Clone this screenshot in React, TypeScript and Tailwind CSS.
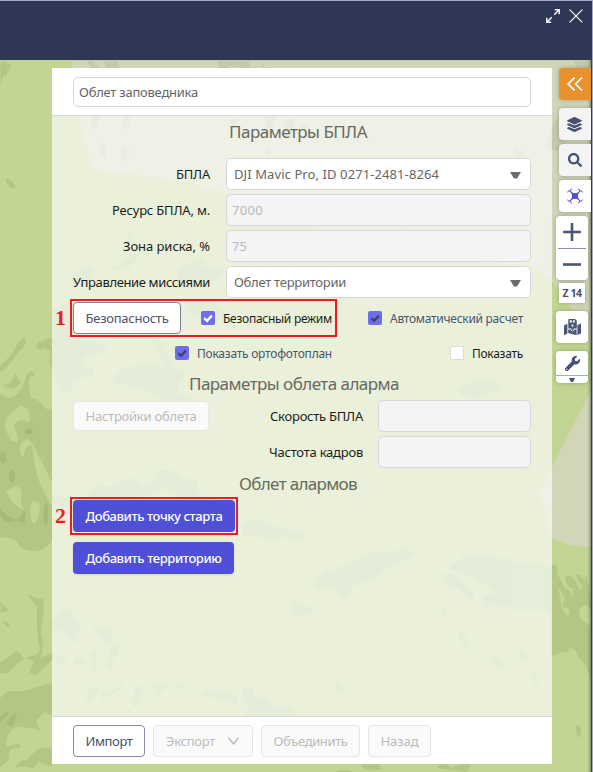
import { useLayoutEffect, useRef, useState } from "react";
import type { ReactNode } from "react";
import { FaLayerGroup, FaSearch, FaWrench } from "react-icons/fa";

/* Text whose tracking is adjusted so that it takes up a given width. */
function Fit({ w, className = "", children }: { w: number; className?: string; children: string }) {
  const ref = useRef<HTMLSpanElement>(null);
  const [spacing, setSpacing] = useState(0);
  useLayoutEffect(() => {
    if (!ref.current) return;
    const natural = ref.current.getBoundingClientRect().width - spacing * children.length;
    setSpacing((w - natural) / children.length);
  }, [w, children]);
  return (
    <span ref={ref} className={`inline-block shrink-0 whitespace-nowrap ${className}`} style={{ letterSpacing: spacing }}>
      {children}
    </span>
  );
}

function Terrain() {
  return (
    <svg className="absolute inset-0 h-full w-full" viewBox="0 0 593 772" preserveAspectRatio="none" aria-hidden="true">
      <rect width="593" height="772" fill="#c2d592" />
      <path d="M72 60H593V345L570 305L552 279L530 264L480 262L408 226L340 235L226 193L185 180L93 169L78 115Z" fill="#d1d6b8" />
      <path d="M593 388L552 468L541 490L552 538L572 545L593 547Z" fill="#d1d6b8" />
      <g fill="#bdc3a5" opacity=".65">
        <path d="M87 60q6 12 12 7l-5-7zM105 60q-2 8 10 8q8-3 2-8zM217 60q3 12 14 5q10 2 20 3l-2-8zM260 61q4 10 8 7zM574 60q7 14 17 8v-8zM548 149q2-28 18-38v40zM515 151q-1-6 4-5q1 5-4 5zM92 114q-3 18 4 14q6-12 2-14zM123 115q-2 20 8 10l-1-10zM102 140q-4 16 3 18q3-10-3-18zM122 146q-3 14 4 14q3-8 3-13zM266 115q-3 23 5 19q6-11 5-19zM285 120q-2 20 6 16q7-10 3-19zM301 124q4 18 9 8l-3-10zM268 148q-3 4 0 7q6 2 2-7z" />
        <path d="M514 150L520 162L526 150zM230 118l4 13 4-13z" />
      </g>
      <path d="M165 127q8-3 12 0q-4 6-12 8l-16 4q5-8 16-12zM163 157q5-8 9-3q-3 5-9 3z" fill="#dadfc2" opacity=".7" />
      <g fill="#b4c686">
        <path d="M2 60q8 2 9 5q-1 7-8 11l-2 8l-1-18zM6 177q0 9 7 11q5 0 0-7zM0 366Q7 358 11 355Q17 341 24 337q5 6-5 14L5 369l-5 2zM36 347q0-6 7-6q5-5 9-3v30q-4-6-1-17q-8-6-10-1zM3 384q8 1 10-6q2-9 4-1l4 5q-4 4-8 6q-8-1-10-4z" />
        <path d="M0 393q9 9 18 0q7-8 8-18q8-9 9 0q-7 0-6 8l2 15q8 0 15 10l6 2v131q-13 16-32 6q-3-11-20-10z" />
        <path d="M27 594l10 4l6 0l1 13l-3 20q4 16 0 27l12-6v7l-17 16l-7-3l5-11l-9-4l-18 16l-7 0v-11l17-11q6 3 5 7l13-3q7-3 4-12l-2-15l0-21l-6-8zM52 683L23 691l-15 0l-8 7v69l9-7q-2-12 7-12q6 2 4-5l-15 4l3-12q7-12 17-7q10 0 16 3l-5-10l8-9l8 4zM52 747q-5 2-11 1q-8 4-14 12q-9 0-12 8q12-3 18 1l6-8q5 5 13 5z" />
        <path d="M0 602q8 7 9 8l-8 3zM3 621q8 0 6 6q-4 0-6-6zM552 565q8-3 6 8l8 15q5 1 8 10v-9q-8-3-8-12q5-6 11 5l4 8q5-4 5-15q6 9 6 34l-7-5q-8 7-3 15q8 5 10 8v55q-4-21-17-28q-10-5-15-1l-8 3zM577 574q9 1 9 12q-7-2-9-12zM576 725q2 10 3 13l3-3v-9zM361 766q5-5 18-3l4 6q-7 3-16 0zM438 768q1-5 9-4l5 4q11-5 17-4q5 1-2 8zM336 772q8-4 18 0z" />
      </g>
      <g fill="#b4cb92" opacity=".85">
        <path d="M65 608q8 2 9 9l9 5q0 6-8 9l5 9q-4 5-12-2l-8-9l-8 1v-10q9-3 6-8zM91 624q8 7 17 4l6 10q-3 4-7 8q-4-8-9-10zM112 645q10-3 6 9q-8 7-6 15q-5 1-6-6zM92 651q7-5 4 19q-5 4-5-6zM55 657q9-4 12 2l-8 6zM75 657q12 0 10 6q-8 4-12-1zM86 701q3-14 11-17l2 8q-5 6-10 11zM101 693q13-2 23-10q2 6-12 12l-11 5zM123 716l10-9q-1-17 5-20q18-5 8 0q-7 10-10 20q-8 0-10 7zM153 685l15-1q0 6-5 6q-3 3-6 9q-3-6 0-9zM172 690q4-10 12-6q-2 7-12 6zM195 692q13 3 12-6q5 8 16 4q2 5 16 6l-2 9q-8-4-15-4zM242 689q13-6 13 7l15 4q-1 11 8 8q15-5 18 3v5h-51q6-13 0-17z" />
        <path d="M315 585q8-17 18-14q10-8 18-8q12-9 20-12l18 2q13-8 27 0q-7 4-12 8l-18 9q-9 9-32 16q-5 11-8 11q-8 2-6-5q-6-4-10-6q-10 5-15-1zM452 565q9-3 13-12q18 5 24 0q9 8 22 5l8 7q16-4 33 3v45q-17-7-34-2q-6-7-16-4q-5-3-14-1q-5-6-3-10q7 0 10-4q-7-7-16-12q-5-5-9-4q-16-3-18-11zM441 575q10-5 18 2q5 8 14 15q6 8-2 8q-8-7-12-12q-15-1-18-13zM441 612q4-11 7-1q0 6-3 4zM458 629q14 8 11 22q-11-11-11-22zM491 658q8-2 12 8q-7 4-12-8zM532 673q10 0 6 15q-6-4-6-15zM335 683q8 0 9 10q-7-1-9-10zM520 655q1-9 6-3q6 9 1 8q-5 1-7-5zM293 602q8-1 22 8q-2 7-22 5z" />
        <path d="M123 248q6-15 10-16q-2 15-10 24zM110 270q23-10 20-22l14-8q-6 19-16 28zM178 270q11-10 29-13q-2 11-11 11q22-5 30 0l-12 11q-20 13-37 8zM70 276q12-12 25-9q-4 12 6 4l-18 14zM52 310q17-14 31-3q-7 8-9 18q13-6 19 3q-2 8-15 12q20-3 18 5q10-3 12 0q-9 12-14 9q-13 1-11 12q13-2 10 10l-19 3q-4 18-12 13l-10-17zM152 338q10-2 14 11l8 18q-3 10-9-3zM187 301q14-6 31 2l8 12q-12 10-22 4q-15-2-17-18z" />
        <path d="M112 382q7-17 23-16q16-6 34 3q15-5 16 8q-10 9-6 17q12 0 16 9q-10 6-18 1q6 10 3 18q-10-9-14-21q-19-13-54-19zM377 445q7-14 20-6l17 4q10-6 18 0l20-4q5 4-5 10q-18 5-25 11l-15 8q-4-12-30-23zM465 385l12-6l20 2q8 10-5 10q-10 3-12 7l-16-2q-8-6 1-11z" />
        <path d="M52 490q10 10 21 6q7 6 14 0l8-11q18 3 25-4q14-8 22 3l24-8q14 3 20 8l-6 7q-11 1-17-3q-12 11-28 8q-8 8-20 4q-18 12-36 10l-27-5zM155 471q18-5 28 6l16 4q-4 12 7 16q10-3 14 5l-10 10q-8-3-13-8q-16 0-19-8q-9-7-13-14zM243 523q16-9 29 1l8 12q-9 7-19 2q-7-5-18-2zM272 528q12-4 20 3q10 0 14 6q-12 3-19 0q-11 1-15-9z" />
      </g>
      <g fill="#a6bb78">
        <ellipse cx="29" cy="431" rx="4" ry="3" /><ellipse cx="12" cy="476" rx="3" ry="7" />
        <ellipse cx="46" cy="514" rx="2.5" ry="12" /><ellipse cx="3" cy="457" rx="3" ry="6" />
        <path d="M0 508q10 13 19 10l6-9v14q-9-4-16-1q-7 0-9-9zM0 717l7-5q3 3-3 6l-4 5zM7 724q-1-4 10-12q-2 10-6 15z" />
      </g>
      <g fill="#c2d592">
        <path d="M5 421q5-10 16-16q12 5 8 17q-11-7-15 4q5 11 3 16q-11-2-12-21zM20 445q7-12 12-1q-8 2-8 12q-5 0-4-11zM31 440l22 43v24q-16-24-18-43zM6 492q12-11 16 0q-3 9 2 17q-8 0-18-17zM32 501q9-1 8 10q-2 8-6 13q-6-8-2-23z" />
        <path d="M559 586l7 12l-3 10zM569 648q9-1 12 13q-9-3-12-13zM563 607q9-1 7 8q-4 2-7-8z" />
      </g>
    </svg>
  );
}

function Caret() {
  return (
    <svg className="h-[7px] w-[11px]" viewBox="0 0 11 7"><path d="M0 0h11L7 6.4H4z" fill="#6c6c6c" /></svg>
  );
}

function Field({ label, lw, children, w, disabled, select }: { label: string; lw: number; children: string; w: number; disabled?: boolean; select?: boolean }) {
  return (
    <div className="flex h-8 items-center justify-end">
      <Fit w={lw} className="text-[#1c1d1a]">{label}</Fit>
      <div className={`ml-4 flex h-8 w-[305px] items-center justify-between rounded-[5px] border border-[#d6d7dc] pr-[9px] ${select ? "pl-[7px]" : "pl-[5px]"} ${disabled ? "bg-[#f4f4f4] text-[#b9b9b9]" : "bg-white text-[#666]"}`}>
        <Fit w={w}>{children}</Fit>
        {select && <span className="mt-[2px]"><Caret /></span>}
      </div>
    </div>
  );
}

function EmptyField({ label, w }: { label: string; w: number }) {
  return (
    <div className="flex h-8 items-center justify-end text-[#1c1d1a]">
      <Fit w={w}>{label}</Fit>
      <div className="ml-[15px] h-8 w-[153px] rounded-[5px] border border-[#d6d7dc] bg-[#f4f4f4]" />
    </div>
  );
}

function Check({ label, w, tick, color }: { label: string; w: number; tick?: string; color: string }) {
  return (
    <label className={`flex items-center gap-2 text-[12px] ${color}`}>
      <span className={`flex size-[14px] items-center justify-center ${tick ? "rounded-[2px] bg-[#6f6eea]" : "rounded-[1px] border border-[#dadbe0] bg-white"}`}>
        {tick && <svg className="size-[10px]" viewBox="0 0 10 10"><path d="M1.2 5.1L4 7.8L8.9 2.6" fill="none" stroke={tick} strokeWidth="2.3" /></svg>}
      </span>
      <Fit w={w} className="relative top-px">{label}</Fit>
    </label>
  );
}

function Heading({ w, className, children }: { w: number; className: string; children: string }) {
  return (
    <h2 className={`flex h-6 items-center text-[17px] leading-6 text-[#676a61] ${className}`}>
      <Fit w={w}>{children}</Fit>
    </h2>
  );
}

function Tool({ className, children }: { className: string; children: ReactNode }) {
  return <button className={`flex items-center justify-center text-[#465170] shadow-[0_0_4px_rgba(60,65,60,.35)] ${className}`}>{children}</button>;
}

function DroneIcon() {
  return (
    <svg className="size-4" viewBox="0 0 16 16" fill="none" stroke="#5150d5" strokeWidth="1">
      <path d="M2.6 2.6L13.4 13.4M13.4 2.6L2.6 13.4" strokeWidth="1.3" />
      <path d="M.5 4.4Q.8 2.8 2.6 2.6Q4.2 2.4 4.8.6M11.2.6Q11.8 2.4 13.4 2.6Q15.2 2.8 15.5 4.4M.5 11.6Q.8 13.2 2.6 13.4Q4.2 13.6 4.8 15.4M11.2 15.4Q11.8 13.6 13.4 13.4Q15.2 13.2 15.5 11.6" />
      <path d="M5 5L6.5 5.6H9.5L11 5L10.4 8L11 11L9.5 10.4H6.5L5 11L5.6 8z" fill="#5150d5" />
    </svg>
  );
}

function SaveMapIcon() {
  return (
    <svg className="h-[17px] w-[17px]" viewBox="0 0 17 17" fill="#4b5674">
      <path d="M0 6.4L3.4 4.8V14.6L0 16.2zM4.2 10.5H12.6V16.2L4.2 14zM13.4 6L17 4.6V14.4L13.4 16z" />
      <path fillRule="evenodd" d="M4.3 .4Q4.3 0 5 0H11L12.8 1.8V9.6H9.8L8.5 11.2L7.2 9.6H4.3zM5.8 1.2V3.4H10.8V1.2zM7.6 5.4V7.4H9.4V5.4z" />
      <path d="M7.8 1H9V3.8H7.8z" />
      <path d="M6.6 10.4L8.5 12.6L10.4 10.4" fill="none" stroke="white" strokeWidth=".7" />
    </svg>
  );
}

export default function App() {
  return (
    <div className="relative flex h-[772px] w-[593px] flex-col overflow-hidden border-t border-r border-[#a4a8be] font-['Noto_Sans','Open_Sans',sans-serif] text-[13px] leading-5">
      <Terrain />
      <header className="relative flex h-[59px] shrink-0 items-start justify-end gap-[9px] bg-[#2e3755] pt-[8px] pr-[9px]">
        <svg className="size-[14px]" viewBox="0 0 14 14" fill="none" stroke="white" strokeWidth="1.4">
          <path d="M8.8.8H13.2V5.2M.8 8.8V13.2H5.2M13 1L8.2 5.8M5.8 8.2L1 13" />
        </svg>
        <svg className="size-[14px]" viewBox="0 0 15 15" fill="none" stroke="white" strokeWidth="1.2"><path d="M.7.7L14.3 14.3M14.3.7L.7 14.3" /></svg>
      </header>
      <main className="relative flex flex-1 border-r border-[#343965] pt-2 pl-[52px] shadow-[inset_-3px_0_3px_-2px_rgba(70,80,60,.7)]">
        <section className="flex h-[696px] w-[500px] flex-col">
          <div className="h-12 shrink-0 border-b border-[#d5d6da] bg-white px-[21px] pt-[9px]">
            <div className="flex h-[30px] items-center rounded-[5px] border border-[#d6d7dc] px-[5px] text-[#666]">
              <Fit w={119}>Облет заповедника</Fit>
            </div>
          </div>
          <div className="flex-1 bg-white/65 px-[21px] pt-1">
            <Heading w={138} className="pl-[156px]">Параметры БПЛА</Heading>
            <div className="mt-[14px] flex flex-col gap-1">
              <Field label="БПЛА" lw={34} w={205} select>DJI Mavic Pro, ID 0271-2481-8264</Field>
              <Field label="Ресурс БПЛА, м." lw={98} w={31} disabled>7000</Field>
              <Field label="Зона риска, %" lw={87} w={15} disabled>75</Field>
              <Field label="Управление миссиями" lw={137} w={112} select>Облет территории</Field>
            </div>
            <div className="relative mt-1 flex h-8 items-center">
              <span className="absolute top-[5px] -left-[18px] font-['Liberation_Serif',serif] text-[22px] leading-[22px] font-bold text-[#ed1c24]">1</span>
              <div className="absolute -top-[3px] -left-[3px] h-[38px] w-[267px] border-2 border-[#ed1c24]" />
              <button className="h-8 w-[108px] rounded-[4px] border border-[#7d8499] bg-white text-[#4b556f]"><Fit w={83}>Безопасность</Fit></button>
              <div className="ml-5"><Check label="Безопасный режим" w={109} tick="white" color="text-[#1c1d1a]" /></div>
              <div className="ml-9"><Check label="Автоматический расчет" w={133} tick="#3c416c" color="text-[#4b5570]" /></div>
            </div>
            <div className="mt-[9px] flex h-[20px] justify-between pr-2 pl-[102px]">
              <Check label="Показать ортофотоплан" w={135} tick="#3c416c" color="text-[#4b5570]" />
              <Check label="Показать" w={51} color="text-[#1c1d1a]" />
            </div>
            <Heading w={210} className="mt-[9px] pl-[116px]">Параметры облета аларма</Heading>
            <div className="mt-1 flex justify-between">
              <button className="mt-px h-[30px] w-[136px] rounded-[4px] border border-[#e5e7e4] bg-[#fafafa] text-[#bbb]"><Fit w={111}>Настройки облета</Fit></button>
              <div className="flex flex-col gap-1">
                <EmptyField label="Скорость БПЛА" w={93} />
                <EmptyField label="Частота кадров" w={94} />
              </div>
            </div>
            <Heading w={118} className="mt-1 pl-[166px]">Облет алармов</Heading>
            <div className="relative mt-1 h-8 w-[162px]">
              <span className="absolute top-[5px] -left-[18px] font-['Liberation_Serif',serif] text-[22px] leading-[22px] font-bold text-[#ed1c24]">2</span>
              <div className="absolute -top-[3px] -left-[3px] h-[38px] w-[168px] border-2 border-[#ed1c24]" />
              <button className="h-8 w-full rounded-[4px] bg-[#4f4fd8] font-medium text-white"><Fit w={137}>Добавить точку старта</Fit></button>
            </div>
            <button className="mt-[10px] h-8 w-[161px] rounded-[4px] bg-[#4f4fd8] font-medium text-white shadow-sm"><Fit w={136}>Добавить территорию</Fit></button>
          </div>
          <footer className="flex h-12 shrink-0 gap-2 border-t border-[#d2d3d5] bg-white pt-2 pl-[21px] text-[#bbb]">
            <button className="h-8 w-[72px] rounded-[4px] border border-[#858ba0] text-[#465170]"><Fit w={47}>Импорт</Fit></button>
            <button className="flex h-8 w-[100px] items-center justify-between rounded-[4px] border border-[#e6e6e6] bg-[#fafafa] px-3">
              <Fit w={49}>Экспорт</Fit>
              <svg className="h-[8px] w-[13px]" viewBox="0 0 13 8" fill="none" stroke="#b8b8b8" strokeWidth="1.4"><path d="M1.3.6L6.5 6.8L11.7.6" /></svg>
            </button>
            <button className="h-8 w-[99px] rounded-[4px] border border-[#e6e6e6] bg-[#fafafa]"><Fit w={74}>Объединить</Fit></button>
            <button className="h-8 w-[63px] rounded-[4px] border border-[#e6e6e6] bg-[#fafafa]"><Fit w={38}>Назад</Fit></button>
          </footer>
        </section>
        <aside className="ml-1 w-[35px]">
          <Tool className="ml-[3px] h-8 w-8 rounded-l-[4px] bg-[#e8912d] pr-px">
            <svg className="h-[14px] w-4" viewBox="0 0 16 14" fill="none" stroke="white" strokeWidth="1.7"><path d="M7.6.6L1.2 7L7.6 13.4M15 .6L8.6 7L15 13.4" /></svg>
          </Tool>
          <Tool className="mt-2 ml-[3px] h-8 w-8 rounded-l-[4px] bg-[#f4f4f4] pr-px"><FaLayerGroup className="size-[15px]" /></Tool>
          <Tool className="mt-1 ml-[3px] h-8 w-8 rounded-l-[4px] bg-[#f4f4f4] pr-px"><FaSearch className="size-[14px]" /></Tool>
          <Tool className="mt-1 ml-[3px] h-8 w-8 rounded-l-[4px] bg-white"><DroneIcon /></Tool>
          <div className="mt-1 flex h-16 w-8 flex-col rounded-[4px] bg-white px-[2px] shadow-[0_0_4px_rgba(60,65,60,.35)]">
            <button className="flex h-[33px] items-center justify-center border-b border-[#8990a5]"><svg className="size-[18px]" viewBox="0 0 18 18" stroke="#4b5674" strokeWidth="2.6"><path d="M0 9H18M9 0V18" /></svg></button>
            <button className="flex flex-1 items-center justify-center"><svg className="h-[3px] w-[18px]" viewBox="0 0 18 3"><path d="M0 .2H18V2.8H0z" fill="#4b5674" /></svg></button>
          </div>
          <Tool className="mt-[3px] ml-[3px] h-5 w-[26px] bg-white text-[10.5px] leading-5 font-bold"><Fit w={19}>Z 14</Fit></Tool>
          <Tool className="mt-2 h-8 w-8 rounded-[4px] bg-white"><SaveMapIcon /></Tool>
          <div className="mt-2 flex h-8 w-8 flex-col items-center rounded-[4px] bg-white text-[#465170] shadow-[0_0_4px_rgba(60,65,60,.35)]">
            <div className="flex h-[25px] w-full items-center justify-center border-b border-[#a9adb8]"><FaWrench className="size-[15px]" /></div>
            <svg className="mt-[2px] h-1 w-[6px]" viewBox="0 0 6 4"><path d="M0 0H6L4 4H2z" fill="#465170" /></svg>
          </div>
        </aside>
      </main>
    </div>
  );
}
